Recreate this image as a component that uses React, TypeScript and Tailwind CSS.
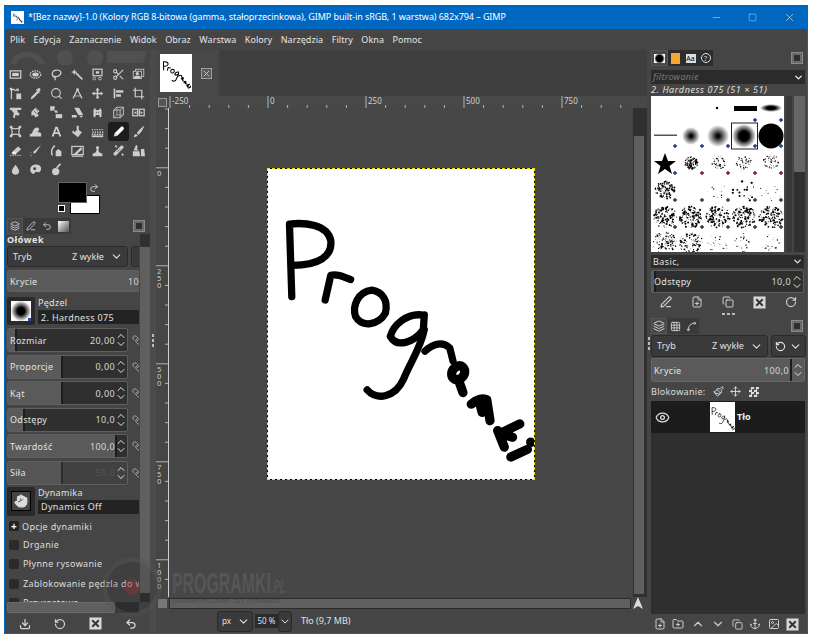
import {
  Anchor, ChevronDown, ChevronUp, Copy, Download, Eye, FilePlus, FolderPlus, Grid3x3, Layers, Link, Minus, Move, Paintbrush,
  PenLine, Redo2, RotateCcw, RotateCw, Scissors, Search, Spline, Square, Undo2, X, Hand, Image as ImageIcon,
} from "lucide-react";

const font = "font-['Noto_Sans',sans-serif]";

// Toolbox glyphs, drawn on a 16 box, order as in the GIMP toolbox
const L = { fill: "none", stroke: "currentColor", strokeWidth: 1.5 };
const toolGlyphs = [
  // selection row
  <><rect x="1.5" y="3.5" width="13" height="9" {...L} /><rect x="4" y="6" width="8" height="4" fill="currentColor" /></>,
  <><ellipse cx="8" cy="8" rx="6.5" ry="4.5" {...L} strokeDasharray="2 1" /><ellipse cx="8" cy="8" rx="4" ry="2.5" fill="currentColor" /></>,
  <path d="M6 12C1 9 2 3 8 2.500C14 2 15 7 11 9.500C9 11 6 11 6 9.500M6 10L6.500 15" {...L} />,
  <><path d="M14 14L6 6" {...L} strokeWidth="2" /><path d="M4 1l1 3 3 1-3 1-1 3-1-3-3-1 3-1z" fill="currentColor" /></>,
  <><rect x="2.500" y="1.500" width="11" height="8" {...L} /><rect x="6" y="4" width="4" height="3" fill="currentColor" /><circle cx="4" cy="13" r="1.700" {...L} strokeWidth="1" /><circle cx="11" cy="13" r="1.700" {...L} strokeWidth="1" /></>,
  null,
  <><rect x="4.500" y="1.500" width="10" height="9" {...L} strokeWidth="1" /><rect x="1.500" y="4" width="10" height="9" fill="#454545" stroke="currentColor" /><circle cx="6.500" cy="7" r="2" fill="currentColor" /><path d="M2 13c0-3 2-3.500 4.500-3.500S11 10 11 13z" fill="currentColor" /></>,
  // second row
  <><path d="M3 15V6C3 2 7 2 8 5" {...L} /><rect x="1" y="1" width="3" height="3" fill="currentColor" /><rect x="9" y="2" width="3" height="3" fill="currentColor" /><rect x="9" y="8" width="6" height="7" fill="currentColor" /></>,
  <path d="M2 15l1-3 7-7 2 2-7 7zM10 3l1.500-1.500c1-1 3.500 1.500 2.500 2.500L12.500 5.500l1 1-1 1-4-4 1-1z" fill="currentColor" />,
  null,
  <><path d="M8 3L2.500 14M8 3l5.500 11" {...L} /><path d="M4 11h8" {...L} strokeWidth="1" /><circle cx="8" cy="3" r="1.600" fill="currentColor" /></>,
  <path d="M8 1l2.500 3H9v3h3V5.500L15 8l-3 2.500V9H9v3h1.500L8 15l-2.500-3H7V9H4v1.500L1 8l3-2.500V7h3V4H5.500z" fill="currentColor" />,
  <><rect x="2" y="2" width="2" height="12" fill="currentColor" /><rect x="5" y="4" width="9" height="3" fill="currentColor" /><rect x="5" y="9" width="6" height="3" fill="currentColor" /></>,
  <><path d="M1 4h11v11" {...L} /><path d="M4 1v11h11" {...L} /></>,
  // third row
  <><path d="M1 2h14v3h-5l1 3 2 1-1 3-4-1-1 4-2-1 1-6H5L3 5H1z" fill="currentColor" /></>,
  <><path d="M3 7l5-5 5 4-3 3 2 3-4 2-2-3-3 1z" fill="currentColor" /><path d="M6 6l3 3M9 4l2 2" stroke="#454545" /></>,
  <><path d="M1 1h4v1.500H2.500V5H1zM3 3l5 5" {...L} /><path d="M7 10h8v5H7z" fill="currentColor" /><path d="M8 5l2 3H6z" fill="currentColor" /></>,
  <path d="M4 2h6l5 9H9zM1 11h6v3H1z M10 12l5 0-2.500 2.500z" fill="currentColor" />,
  <path d="M3 13V5l2-3 1 3h4l1-3 2 3v8l-2 1-1-3H6l-1 3zM6 7v2h1V7zM9 7v2h1V7z" fill="currentColor" />,
  <><path d="M2 5l4-3.500h8V11l-4 3.500H2zM2 5h8v9.500M10 5l4-3.500" {...L} strokeWidth="1.100" /><path d="M2 14.500L6 11h8M6 1.500V11" {...L} strokeWidth="0.800" /></>,
  <><rect x="1" y="4" width="6" height="8" {...L} /><rect x="9" y="4" width="6" height="8" {...L} /><path d="M2.500 8l3-2v4zM13.500 8l-3-2v4z" fill="currentColor" /></>,
  // fourth row
  <><path d="M3 3c3 2 7 2 10 0-1 3-1 7 0 10-3-2-7-2-10 0 1-3 1-7 0-10z" {...L} /><rect x="1" y="1" width="3" height="3" fill="currentColor" /><rect x="12" y="1" width="3" height="3" fill="currentColor" /><rect x="1" y="12" width="3" height="3" fill="currentColor" /><rect x="12" y="12" width="3" height="3" fill="currentColor" /></>,
  <path d="M1 14v-3c3 0 3-2 4-4 1-3 3-4 5-4s3 2 2 4l-2 1c2 1 5 1 5 3v3z" fill="currentColor" />,
  <path d="M6.700 2h2.600L14 14h-2.600l-1-2.800H5.600L4.600 14H2zM6.400 9h3.200L8 4.600z" fill="currentColor" />,
  <><path d="M7 1h2.500v5l4 3-5 6-6-5 4.500-3.500z" fill="currentColor" /><path d="M3 6C1.500 8 1 9 2 10s2-.500 1.500-2z" fill="currentColor" /></>,
  <g fill="currentColor"><path d="M1 13h14v2H1z" />{[2, 5, 8, 11, 14].map((x) => <g key={x}><rect x={x - 1} y="5" width="1.500" height="1.500" /><rect x={x - 0.5} y="8" width="1.700" height="1.700" /><rect x={x - 1} y="10.700" width="2" height="2" /></g>)}</g>,
  <path d="M2 14l1-4 8-8c1-1 2.500 0 3 .500s1.500 2 .500 3l-8 8zM3.500 10.500l2 2" fill="currentColor" stroke="#1d1d1d" strokeWidth="0.500" />,
  <path d="M15 1c-3 2-7 6-9 9l2 2c3-2 6-7 7-11zM5 11c-2 0-2 2-3 4 2 0 5-1 5-2z" fill="currentColor" />,
  // fifth row
  <><path d="M6 8l5-5 4 3-5 5z" fill="currentColor" /><path d="M1 14h14" stroke="currentColor" strokeDasharray="2 1" /><path d="M3 11l3-3 4 3-2 2H5z" fill="#eee" /></>,
  <><path d="M15 1L6 9l-1 3 3-1z" fill="currentColor" /><path d="M1 13l3 2M2 10l1 1" stroke="currentColor" strokeDasharray="1 1" /></>,
  <><path d="M6 2C2 5 1 10 3 14" {...L} strokeWidth="2" /><path d="M7 9l3-3 4 3v6H7z" fill="currentColor" /></>,
  <><rect x="1" y="3" width="14" height="10" {...L} /><path d="M3 13l9-9 2 2-7 7z" fill="currentColor" /><path d="M1 15h14" {...L} /></>,
  <path d="M8 2l2 2-1 3 1 3 4 2v3H2v-3l4-2 1-3-1-3zM8 11v4" fill="currentColor" />,
  <><path d="M5 14L14 5c1-2-1-4-3-3L2 11c-1 2 1 4 3 3z" fill="currentColor" /><path d="M7 7l2 2M9 6l1 1M6 9l1 1" stroke="#454545" /><path d="M4 2l2 2M12 12l2 2" stroke="currentColor" strokeWidth="2" /></>,
  <path d="M5 1l2 2-1 3 3 2H2zM1 9h8l1 6H1zM11 6h4l1 9h-5z" fill="currentColor" />,
  // last row
  <path d="M8 2c2 3 4.500 5.500 4.500 8.200 0 2.600-2 4.300-4.500 4.300s-4.500-1.700-4.500-4.300C3.500 7.500 6 5 8 2z" fill="currentColor" />,
  <><path d="M4 13C1 11 1 6 3 4s7-3 10-1 2 7 0 8-4-1-5 0-2 3-4 2z" fill="currentColor" /><circle cx="7" cy="7" r="1.800" fill="#454545" /></>,
  <><circle cx="7" cy="10.500" r="4.500" fill="currentColor" /><path d="M8 6l5-5" {...L} strokeWidth="2" /></>,
];

const XBox = ({ size = 13, dim = false }: { size?: number; dim?: boolean }) => (
  <svg width={size} height={size} viewBox="0 0 14 14">
    <rect x="0.500" y="0.500" width="13" height="13" fill={dim ? "#5a5a5a" : "#d6d6d6"} stroke={dim ? "#b5b5b5" : "none"} />
    <path d="M3.500 3.500l7 7M10.500 3.500l-7 7" stroke={dim ? "#c8c8c8" : "#333"} strokeWidth={dim ? 1.200 : 2} />
  </svg>
);

const Configure = () => (
  <div className="flex h-[12px] w-[12px] items-center justify-center border border-[#8a8a8a] bg-[#6a6a6a]">
    <div className="h-[6px] w-[6px] bg-[#2e2e2e]" />
  </div>
);

const Spin = () => (
  <div className="relative flex h-full w-[12px] shrink-0 flex-col items-center justify-center text-[#e4e4e4]">
    <ChevronUp size={12} strokeWidth={2} className="-mb-[2px]" />
    <ChevronDown size={12} strokeWidth={2} className="-mt-[2px]" />
  </div>
);

const Slider = ({ label, value, fill, width = "w-[121px]", height = "h-[24px]", off = false }: {
  label: string; value: string; fill: string; width?: string; height?: string; off?: boolean;
}) => (
  <div className={`relative flex shrink-0 items-center ${width} ${height} rounded-[2px] border border-[#5f5f5f] ${off ? "bg-[#414141]" : "bg-[#2f2f2f]"}`}>
    <div className={`absolute left-0 top-0 h-full ${fill} ${off ? "border-r-2 border-[#2b2b2b] bg-[#555]" : "border-r-2 border-[#1c1c1c] bg-[#5a5a5a]"}`} />
    <span className="relative pl-[2px] text-[9px] leading-none tracking-[0.3px] text-[#e2e2e2]">{label}</span>
    <span className={`relative ml-auto text-[9px] leading-none tracking-[0.4px] ${off ? "text-[#555]" : "text-[#d8d8d8]"}`}>{value}</span>
    <Spin />
  </div>
);

const SliderRow = (props: { label: string; value: string; fill: string; off?: boolean }) => (
  <div className="flex items-center gap-[4px]">
    <Slider {...props} />
    <Link size={10} className="rotate-90 text-[#bbb]" />
  </div>
);

const Combo = ({ label, value, className }: { label: string; value: string; className: string }) => (
  <div className={`flex items-center rounded-[3px] border border-[#2a2a2a] bg-[#3a3a3a] pl-[5px] pr-[4px] text-[9px] tracking-[0.1px] text-[#e0e0e0] ${className}`}>
    <span>{label}</span>
    <span className="ml-auto mr-[6px]">{value}</span>
    <ChevronDown size={13} />
  </div>
);

const Check = ({ label }: { label: string }) => (
  <div className="flex h-[19.5px] shrink-0 items-center gap-[4px] pl-[2px] whitespace-nowrap text-[9px] tracking-[0.35px] text-[#dedede]">
    <span className="h-[10px] w-[10px] shrink-0 rounded-[2px] bg-[#2a2a2a]" />
    {label}
  </div>
);

// Small tab with an icon inside
const DockTab = ({ children, active = false }: { children: React.ReactNode; active?: boolean }) => (
  <div className={`flex h-[16px] w-[16px] items-center justify-center text-[#cfcfcf] ${active ? "border border-[#555] bg-[#484848]" : "bg-[#3a3a3a]"}`}>
    {children}
  </div>
);

const Ruler = () => {
  const ticks = Array.from({ length: 24 }, (_, i) => 2 + i * 19.6);
  return (
    <svg width="464" height="12" className="block">
      {ticks.map((x, i) => (
        <line key={i} x1={x} x2={x} y1={i % 5 === 0 ? 0 : 9} y2="12" stroke="#cfcfcf" strokeWidth="0.8" />
      ))}
      {["-250", "0", "250", "500", "750"].map((t, i) => (
        <text key={t} x={4 + i * 98} y="8" fontSize="8" fill="#cfcfcf">{t}</text>
      ))}
    </svg>
  );
};

const VRuler = () => {
  const ticks = Array.from({ length: 25 }, (_, i) => 1 + i * 19.6);
  const labels = [["0"], ["2", "5", "0"], ["5", "0", "0"], ["7", "5", "0"], ["1", "0", "0", "0"]];
  return (
    <svg width="12" height="489" className="block">
      {ticks.map((y, i) => (
        <line key={i} y1={y} y2={y} x1={(i - 3) % 5 === 0 ? 0 : 9} x2="12" stroke="#cfcfcf" strokeWidth="0.8" />
      ))}
      {labels.map((l, i) =>
        l.map((d, j) => (
          <text key={`${i}${j}`} x="1" y={68 + i * 98 + j * 7} fontSize="7.5" fill="#cfcfcf">{d}</text>
        ))
      )}
    </svg>
  );
};

const Drawing = ({ className, width = 2 }: { className?: string; width?: number }) => (
  <svg viewBox="20 25 805 935" className={className} fill="none" stroke="#000" strokeLinecap="round" strokeLinejoin="round" strokeWidth={22 * width / 2}>
    <path d="M92 410L85 190C130 185 200 190 210 240C215 290 170 315 95 315" />
    <path d="M193 420L210 345C230 340 250 350 270 358" />
    <path d="M335 390C290 395 275 440 285 470C305 505 355 495 375 460C385 420 365 395 335 390Z" />
    <path d="M485 465C440 460 400 495 390 530C410 565 460 550 490 510L493 465" />
    <path d="M493 510C480 570 450 610 430 660C405 715 350 725 320 692" />
    <path d="M495 575C520 550 550 545 570 565L580 605" />
    <g strokeWidth={28 * width / 2}>
      <path d="M590 622C572 632 572 652 585 660C603 665 618 648 615 632C608 618 600 616 590 622Z" />
      <path d="M600 672L610 700" />
      <path d="M635 735C650 722 670 715 682 722L692 785M660 728L668 760" />
      <path d="M715 815L735 865M782 795L720 825L760 835" />
      <path d="M755 895L805 872" />
      <path d="M815 850L816 851" />
    </g>
  </svg>
);

// Deterministic scatter, for the speckled brush thumbnails
const scatter = (seed: number, cx: number, cy: number, r: number, n: number, size: number) => {
  let s = seed * 7919;
  const next = () => {
    s = (s * 9301 + 49297) % 233280;
    return s / 233280;
  };
  return Array.from({ length: n }, (_, i) => {
    const a = next() * Math.PI * 2;
    const d = Math.sqrt(next()) * r;
    return <circle key={`${seed}-${i}`} cx={cx + Math.cos(a) * d} cy={cy + Math.sin(a) * d * 0.9} r={next() * size + 0.2} fill="#000" />;
  });
};

const BrushGrid = () => {
  const marks = [24, 51, 77, 104, 130];
  return (
    <svg viewBox="0 0 133 156" width="133" height="156" className="block bg-white">
      <defs>
        <radialGradient id="soft">
          <stop offset="10%" stopColor="#000" />
          <stop offset="100%" stopColor="#000" stopOpacity="0" />
        </radialGradient>
        <radialGradient id="mid">
          <stop offset="40%" stopColor="#000" />
          <stop offset="100%" stopColor="#000" stopOpacity="0" />
        </radialGradient>
      </defs>
      <circle cx="66" cy="12" r="1.200" fill="#000" />
      <rect x="83" y="10" width="23" height="5" fill="#000" />
      <ellipse cx="120" cy="12" rx="11" ry="4" fill="url(#mid)" />
      <rect x="3" y="38.500" width="23" height="1.500" fill="#555" />
      <circle cx="40" cy="40" r="9" fill="url(#soft)" />
      <circle cx="67" cy="40" r="11" fill="url(#soft)" />
      <rect x="80.500" y="27" width="26" height="26" fill="none" stroke="#222" strokeWidth="1" />
      <circle cx="93" cy="40" r="12" fill="url(#mid)" />
      <circle cx="120" cy="40" r="12.500" fill="#000" />
      <path d="M14 57l3 8 8 0-6.500 5 2.500 8-7-5-7 5 2.500-8-6.500-5 8 0z" fill="#000" />
      {scatter(3, 40, 67, 7, 110, 0.7)}
      {scatter(7, 67, 66, 8, 45, 0.6)}
      {scatter(11, 93, 66, 8, 45, 0.6)}
      {scatter(13, 120, 66, 8, 60, 0.5)}
      {scatter(17, 14, 94, 10, 110, 0.8)}
      {scatter(19, 67, 95, 11, 10, 0.6)}
      {scatter(23, 93, 95, 12, 18, 1)}
      {scatter(29, 120, 95, 11, 12, 0.4)}
      {[14, 40, 67, 93, 120].map((x, i) => scatter(31 + i, x, 121, 12, 130, 0.9))}
      {[14, 40, 67, 93, 120].map((x, i) => scatter(41 + i, x, 147, i < 2 ? 12 : 11, i < 2 ? 110 : 20, 0.7))}
      {marks.map((x, i) => (
        <g key={x}>
          {i > 2 && <path d={`M${x - 2} 24h4M${x} 22v4`} stroke="#1c3a7a" strokeWidth="1.400" />}
          <path d={`M${x - 2} 50h4M${x} 48v4`} stroke="#1c3a7a" strokeWidth="1.400" />
          <path d={`M${x - 2} 77h4M${x} 75v4`} stroke={i === 0 ? "#1c3a7a" : "#7a1c2a"} strokeWidth="1.400" />
          <path d={`M${x - 2} 104h4M${x} 102v4`} stroke="#333" strokeWidth="1.400" />
          <path d={`M${x - 2} 131h4M${x} 129v4`} stroke="#333" strokeWidth="1.400" />
        </g>
      ))}
    </svg>
  );
};

const Grip = ({ vertical = true }: { vertical?: boolean }) => (
  <div className={`flex gap-[2px] ${vertical ? "flex-col" : ""}`}>
    {[0, 1, 2].map((i) => (
      <span key={i} className={vertical ? "h-[3px] w-[2px] bg-[#bbb]" : "h-[2px] w-[3px] bg-[#bbb]"} />
    ))}
  </div>
);

export default function App() {
  return (
    <div className={`h-[641px] w-[813px] overflow-hidden bg-white pl-[4px] pt-[5px] ${font}`}>
      <div className="relative flex h-[629px] w-[804px] flex-col border border-t-0 border-[#0067c0] bg-[#454545]">
        {/* Title bar */}
        <div className="flex h-[24px] shrink-0 items-center bg-[#0067c0] pl-[6px] text-white">
          <div className="h-[13px] w-[13px] bg-white p-[1px]">
            <Drawing className="h-full w-full" width={3} />
          </div>
          <span className="ml-[4px] whitespace-nowrap text-[9px] tracking-[-0.07px]">
            *[Bez nazwy]-1.0 (Kolory RGB 8-bitowa (gamma, stałoprzecinkowa), GIMP built-in sRGB, 1 warstwa) 682x794 – GIMP
          </span>
          <div className="ml-auto flex items-center gap-[26px] pr-[11px]">
            <Minus size={11} strokeWidth={1} />
            <Square size={9} strokeWidth={1} />
            <X size={13} strokeWidth={1} />
          </div>
        </div>

        {/* Menu */}
        <div className="flex h-[21px] shrink-0 items-center gap-[8.5px] bg-[#454545] pl-[5px] text-[9px] tracking-[0.05px] text-[#e6e6e6]">
          {["Plik", "Edycja", "Zaznaczenie", "Widok", "Obraz", "Warstwa", "Kolory", "Narzędzia", "Filtry", "Okna", "Pomoc"].map((m) => (
            <span key={m}>{m}</span>
          ))}
        </div>

        <div className="flex min-h-0 flex-1">
          {/* Left dock */}
          <div className="flex w-[145px] shrink-0 flex-col">
            <svg width="145" height="15" className="block shrink-0">
              <path d="M8 14C12 2 28 0 38 14" stroke="#505050" strokeWidth="6" fill="none" />
              <circle cx="60" cy="8" r="8" fill="#505050" />
              <circle cx="90" cy="8" r="8" fill="#505050" />
              <path d="M102 1h40l-4 12h-36z" fill="#505050" />
            </svg>
            <div className="grid h-[114px] shrink-0 grid-cols-[repeat(7,20.6px)] auto-rows-[19px]">
              {toolGlyphs.map((glyph, i) => (
                <div key={i} className={`flex items-center justify-center ${i === 26 ? "rounded-[3px] bg-[#1d1d1d] text-white" : "text-[#cdcdcd]"}`}>
                  {i === 5 ? <Scissors size={13} strokeWidth={2} /> : i === 9 ? <Search size={13} strokeWidth={2} /> : (
                    <svg width="13" height="13" viewBox="0 0 16 16">{glyph}</svg>
                  )}
                </div>
              ))}
            </div>
            {/* Colours */}
            <div className="relative mt-[3px] h-[34px] shrink-0">
              <div className="absolute left-[65px] top-[13px] h-[19px] w-[30px] border border-black bg-white" />
              <div className="absolute left-[53px] top-0 h-[21px] w-[29px] border border-[#666] bg-black" />
              <div className="absolute left-[53px] top-[23px] h-[7px] w-[7px] border border-white bg-black" />
              <Redo2 size={10} className="absolute left-[84px] top-[1px] text-[#ddd]" />
            </div>
            {/* Tool options tabs */}
            <div className="mt-[2px] flex h-[16px] shrink-0 items-center pl-[2px] pr-[5px]">
              <DockTab active><Layers size={10} /></DockTab>
              <DockTab><PenLine size={10} /></DockTab>
              <DockTab><Undo2 size={10} /></DockTab>
              <DockTab><div className="h-[11px] w-[11px] bg-gradient-to-br from-white to-[#555]" /></DockTab>
              <div className="ml-auto"><Configure /></div>
            </div>
            <div className="flex h-[368px] shrink-0">
              <div className="ml-[2px] h-[368px] w-[132px] overflow-hidden">
                <div className="flex w-[190px] flex-col">
                  <div className="h-[12px] text-[9px] font-bold leading-[12px] tracking-[0.5px] text-[#e6e6e6]">Ołówek</div>
                  <div className="flex gap-[3px]">
                    <Combo label="Tryb" value="Z wykłe" className="h-[21px] w-[121px]" />
                    <div className="h-[21px] w-[20px] rounded-[3px] border border-[#2a2a2a] bg-[#3a3a3a]" />
                  </div>
                  <div className="mt-[3px] flex">
                    <div className="flex h-[22px] w-[170px] items-center rounded-[2px] border border-[#5f5f5f] bg-[#5a5a5a]">
                      <span className="w-[120px] pl-[2px] text-[9px] leading-none tracking-[0.3px] text-[#e2e2e2]">Krycie</span>
                      <span className="text-[9px] leading-none tracking-[0.4px] text-[#d8d8d8]">100,0</span>
                    </div>
                  </div>
                  <div className="mt-[5px] flex h-[28px] gap-[3px]">
                    <div className="flex h-[28px] w-[28px] shrink-0 items-center justify-center rounded-[2px] bg-[#2a2a2a]">
                      <div className="relative h-[20px] w-[20px] bg-[radial-gradient(circle,#000_25%,#fff_72%)]">
                        <span className="absolute bottom-0 right-0 h-[3px] w-[3px] bg-[#2a4a9a]" />
                      </div>
                    </div>
                    <div className="flex flex-col">
                      <span className="h-[13px] text-[9px] leading-[11px] tracking-[0.3px] text-[#e0e0e0]">Pędzel</span>
                      <div className="flex h-[14px] w-[120px] items-center bg-[#232323] pl-[3px] text-[9px] leading-none tracking-[0.35px] text-[#e0e0e0]">2. Hardness 075</div>
                    </div>
                  </div>
                  <div className="mt-[3px] flex flex-col gap-[2.6px]">
                    <SliderRow label="Rozmiar" value="20,00" fill="w-[9px]" />
                    <SliderRow label="Proporcje" value="0,00" fill="w-[55px]" />
                    <SliderRow label="Kąt" value="0,00" fill="w-[55px]" />
                    <SliderRow label="Odstępy" value="10,0" fill="w-[17px]" />
                    <SliderRow label="Twardość" value="100,0" fill="w-[109px]" />
                    <SliderRow label="Siła" value="50,0" fill="w-[55px]" off />
                  </div>
                  <div className="mt-[2px] flex h-[29px] gap-[3px]">
                    <div className="flex h-[29px] w-[28px] shrink-0 items-center justify-center rounded-[2px] bg-[#2a2a2a]">
                      <div className="flex h-[20px] w-[20px] items-center justify-center border border-black bg-[#444]">
                        <Hand size={14} fill="#ddd" className="text-[#ddd]" />
                      </div>
                    </div>
                    <div className="flex flex-col">
                      <span className="h-[13px] text-[9px] leading-[11px] tracking-[0.3px] text-[#e0e0e0]">Dynamika</span>
                      <div className="flex h-[14px] w-[120px] items-center bg-[#232323] pl-[3px] text-[9px] leading-none tracking-[0.35px] text-[#e0e0e0]">Dynamics Off</div>
                    </div>
                  </div>
                  <div className="mt-[2px] flex h-[17px] items-center gap-[3px] pl-[2px] text-[9px] tracking-[0.35px] text-[#dedede]">
                    <span className="flex h-[10px] w-[10px] items-center justify-center rounded-[2px] bg-[#222] text-[10px] font-bold leading-none text-white">+</span>
                    Opcje dynamiki
                  </div>
                  <Check label="Drganie" />
                  <Check label="Płynne rysowanie" />
                  <Check label="Zablokowanie pędzla do widoku" />
                  <Check label="Przyrostowe" />
                </div>
              </div>
              <div className="ml-[1px] h-[368px] w-[10px] bg-[#303030] pt-[13px]">
                <div className="h-[346px] w-full bg-[#5f5f5f]" />
              </div>
            </div>
            <div className="ml-[2px] h-[11px] w-[132px] shrink-0 bg-[#2f2f2f]">
              <div className="h-full w-[108px] rounded-[1px] border border-[#6a6a6a] bg-[#5f5f5f]" />
            </div>
            <div className="flex h-[21px] shrink-0 items-center justify-around px-[2px] text-[#d2d2d2]">
              <Download size={12} strokeWidth={2.500} />
              <RotateCcw size={12} strokeWidth={2.500} />
              <XBox />
              <Undo2 size={12} strokeWidth={2.500} />
            </div>
          </div>

          {/* Pane handle */}
          <div className="flex w-[6px] shrink-0 items-start justify-center bg-[#4b4b4b] pt-[284px]"><Grip /></div>

          {/* Canvas column */}
          <div className="flex w-[491px] shrink-0 flex-col">
            <div className="flex h-[46px] shrink-0 bg-[#3f3f3f]">
              <div className="flex h-[46px] w-[63px] items-center bg-[#484848] pl-[4px]">
                <div className="h-[38px] w-[32px] bg-white p-[1px]">
                  <Drawing className="h-full w-full" width={2.500} />
                </div>
                <div className="ml-[9px]"><XBox size={11} dim /></div>
              </div>
            </div>
            <div className="flex h-[12px] shrink-0 bg-[#484848]">
              <div className="flex h-[12px] w-[12px] items-center justify-center">
                <div className="h-[9px] w-[9px] border border-[#999] bg-[#555]" />
              </div>
              <Ruler />
            </div>
            <div className="flex min-h-0 flex-1">
              <VRuler />
              <div className="h-[489px] w-[464px] border-l border-[#cfcfcf] bg-[#474747] pl-[98px] pt-[60px]">
                <div className="h-[312px] w-[268px] border border-dashed border-[#f2e600] bg-black">
                  <div className="h-full w-full bg-white">
                    <Drawing className="h-full w-full" />
                  </div>
                </div>
              </div>
              <div className="ml-[1px] flex w-[14px] flex-col bg-[#303030] pl-[1px] pr-[3px] pt-[28px]">
                <div className="h-[458px] w-full bg-[#5f5f5f]" />
              </div>
            </div>
            <div className="flex h-[12px] shrink-0 items-center">
              <div className="ml-[2px] h-[9px] w-[9px] bg-[#777]" />
              <div className="ml-[2px] h-[11px] w-[462px] border border-[#2b2b2b] bg-[#606060]" />
              <svg width="12" height="12" viewBox="0 0 12 12" className="ml-[1px]"><path d="M6 0l5 12-5-3-5 3z" fill="#ddd" /></svg>
            </div>
            <div className="flex h-[24px] shrink-0 items-center pl-[61px] text-[9px] text-[#e0e0e0]">
              <div className="flex h-[21px] w-[36px] items-center justify-between rounded-[3px] border border-[#2a2a2a] bg-[#3a3a3a] pl-[4px] pr-[2px] text-[8px]">
                px<ChevronDown size={13} />
              </div>
              <div className="ml-[2px] flex h-[14px] w-[23px] items-center justify-center bg-[#2b2b2b] text-[8px]">50 %</div>
              <div className="flex h-[21px] w-[14px] items-center justify-center rounded-[3px] border border-[#2a2a2a] bg-[#3a3a3a]">
                <ChevronDown size={13} />
              </div>
              <span className="ml-[9px]">Tło (9,7 MB)</span>
            </div>
          </div>

          {/* Pane handle */}
          <div className="flex w-[3px] shrink-0 justify-center pt-[287px]"><Grip /></div>

          {/* Right dock */}
          <div className="flex w-[156px] shrink-0 flex-col pl-[1px]">
            <div className="flex h-[16px] shrink-0 items-center">
              <div className="flex h-[16px] w-[17px] items-center justify-center border border-[#555] bg-[#484848]">
                <div className="h-[9px] w-[11px] bg-[radial-gradient(circle,#000_45%,#fff_75%)]" />
              </div>
              <div className="flex h-[16px] w-[15px] items-center justify-center bg-[#2d2d2d]"><div className="h-[11px] w-[9px] bg-[#f0a830]" /></div>
              <div className="flex h-[16px] w-[15px] items-center justify-center bg-[#2d2d2d]"><div className="h-[9px] w-[10px] bg-[#ddd] text-center text-[7px] leading-[9px] text-black">Aa</div></div>
              <div className="flex h-[16px] w-[15px] items-center justify-center bg-[#2d2d2d]"><div className="h-[10px] w-[10px] rounded-full border border-[#ddd] text-center text-[7px] leading-[9px] text-[#ddd]">?</div></div>
              <div className="ml-auto mr-[3px]"><Configure /></div>
            </div>
            <div className="mt-[4px] flex h-[14px] w-[154px] shrink-0 items-center justify-between bg-[#2b2b2b] pl-[2px] pr-[1px] text-[9px] italic tracking-[0.3px] text-[#777]">
              filtrowanie<ChevronDown size={11} className="text-[#eee]" strokeWidth={3} />
            </div>
            <div className="flex h-[12px] shrink-0 items-center text-[9px] italic tracking-[0.6px] text-[#e2e2e2]">2. Hardness 075 (51 × 51)</div>
            <div className="flex h-[156px] shrink-0">
              <BrushGrid />
              <div className="ml-[2px] h-full w-[6px] bg-[#383838]" />
              <div className="ml-[2px] flex h-full w-[11px] flex-col bg-[#303030]">
                <div className="h-[76px] bg-[#666]" />
              </div>
            </div>
            <div className="mt-[3px] flex h-[13px] w-[153px] shrink-0 items-center justify-between bg-[#2b2b2b] pl-[2px] pr-[1px] text-[9px] tracking-[0.4px] text-[#e0e0e0]">
              Basic,<ChevronDown size={11} strokeWidth={3} />
            </div>
            <div className="mt-[2px]"><Slider label="Odstępy" value="10,0" fill="w-[4px]" width="w-[153px]" height="h-[23px]" /></div>
            <div className="flex h-[18px] w-[155px] shrink-0 items-center justify-around text-[#cdcdcd]">
              <PenLine size={12} strokeWidth={2.500} />
              <FilePlus size={12} strokeWidth={2} />
              <Copy size={12} strokeWidth={2} />
              <XBox />
              <RotateCw size={12} strokeWidth={2.500} />
            </div>
            <div className="flex h-[7px] w-[155px] shrink-0 justify-center pt-[2px]"><Grip vertical={false} /></div>
            <div className="flex h-[16px] shrink-0 items-center">
              <DockTab active><Layers size={12} /></DockTab>
              <DockTab><Grid3x3 size={11} /></DockTab>
              <DockTab><Spline size={11} /></DockTab>
              <div className="ml-auto mr-[3px]"><Configure /></div>
            </div>
            <div className="mt-[1px] flex h-[22px] shrink-0 gap-[3px]">
              <Combo label="Tryb" value="Z wykłe" className="h-[22px] w-[117px]" />
              <div className="flex h-[22px] w-[35px] items-center justify-between rounded-[3px] border border-[#2a2a2a] bg-[#3a3a3a] px-[3px] text-[#e0e0e0]">
                <RotateCcw size={11} strokeWidth={2.500} /><ChevronDown size={13} />
              </div>
            </div>
            <div className="mt-[1px] flex h-[24px] w-[154px] shrink-0 items-center rounded-[2px] border border-[#666] bg-[#5a5a5a]">
              <span className="pl-[2px] text-[9px] leading-none tracking-[0.3px] text-[#e2e2e2]">Krycie</span>
              <span className="ml-auto text-[9px] leading-none tracking-[0.4px] text-[#d8d8d8]">100,0</span>
              <span className="ml-[1px] h-full w-[2px] bg-[#1c1c1c]" />
              <Spin />
            </div>
            <div className="flex h-[19px] shrink-0 items-center text-[9px] tracking-[0.3px] text-[#dedede]">
              Blokowanie:
              <Paintbrush size={11} className="ml-[8px]" />
              <Move size={11} className="ml-[6px]" />
              <div className="ml-[8px] h-[10px] w-[10px] bg-[repeating-conic-gradient(#ddd_0_25%,#555_0_50%)] bg-[length:5px_5px]" />
            </div>
            <div className="flex h-[213px] w-[154px] shrink-0 flex-col bg-[#2f2f2f]">
              <div className="flex h-[32px] items-center bg-[#1c1c1c]">
                <Eye size={15} className="ml-[4px] text-[#e0e0e0]" />
                <div className="ml-[40px] h-[30px] w-[25px] bg-white">
                  <Drawing className="h-full w-full" width={2} />
                </div>
                <span className="ml-[2px] text-[9px] font-bold text-[#eee]">Tło</span>
              </div>
            </div>
            <div className="flex h-[20px] w-[155px] shrink-0 items-center justify-between pl-[3px] pr-[7px] text-[#cdcdcd]">
              <FilePlus size={12} strokeWidth={2} />
              <FolderPlus size={12} strokeWidth={2} />
              <ChevronUp size={14} strokeWidth={2} />
              <ChevronDown size={14} strokeWidth={2} />
              <Copy size={11} strokeWidth={2} />
              <Anchor size={12} strokeWidth={2} />
              <ImageIcon size={12} strokeWidth={2} />
              <XBox />
            </div>
          </div>
        </div>

        {/* Site watermark over the screenshot */}
        <div className="pointer-events-none absolute left-[97px] top-[552px] flex h-[60px] w-[60px] items-center justify-center rounded-full border-[5px] border-[#6a6a6a]/25 bg-[#222]/15">
          <div className="h-[16px] w-[16px] rounded-full bg-[#a33]/35" />
        </div>
        <div className="pointer-events-none absolute left-[167px] top-[565px] flex flex-col leading-none">
          <div className="h-[26px] w-[236px] origin-left scale-x-[0.53] whitespace-nowrap font-['Liberation_Sans',sans-serif] text-[30px] font-bold leading-[26px] text-[#565656]">
            PROGRAMKI<span className="text-[18px] italic">.PL</span>
          </div>
          <span className="mt-[3px] whitespace-nowrap text-[5px] font-bold tracking-[0.15px] text-[#525252]">DARMOWE PROGRAMY, GRY, STEROWNIKI</span>
        </div>
      </div>
    </div>
  );
}
